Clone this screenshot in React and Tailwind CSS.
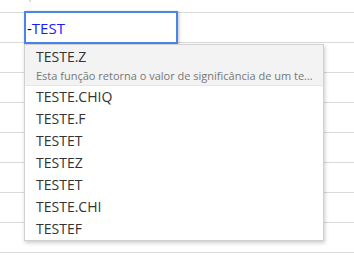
import React from "react";

export default function App() {
  const rows = Array.from({ length: 8 });
  const items = ["TESTE.CHIQ", "TESTE.F", "TESTET", "TESTEZ", "TESTET", "TESTE.CHI", "TESTEF"];
  return (
    <div className="relative w-[354px] h-[275px] bg-white overflow-hidden" style={{ fontFamily: '"Open Sans", sans-serif' }}>
      <div className="flex flex-col">
        <div className="h-[13px] border-b border-[#dadada]" />
        {rows.map((_, i) => (
          <div key={i} className="h-[30px] border-b border-[#dadada]" />
        ))}
      </div>
      <div className="absolute left-[29px] top-0 w-[2px] h-[2px] bg-[#d0d0d0] rounded-sm" />

      <div className="absolute left-[24px] top-[11px] w-[154px] h-[33px] border-2 border-[#4a86e8] bg-white flex items-center shadow-[1px_1px_3px_rgba(0,0,0,0.25)]">
        <span className="text-[15px] leading-none pl-[1px] pt-[1px]">
          <span className="text-black">-</span>
          <span className="text-[#1a1aff]">TEST</span>
        </span>
      </div>

      <div className="absolute left-[24px] top-[44px] w-[300px] bg-white border border-[#d0d0d0] shadow-[1px_2px_4px_rgba(0,0,0,0.2)]">
        <div className="bg-[#f3f3f3] border-b border-[#e6e6e6] px-[11px] pt-[2px] pb-[1px]">
          <div className="text-[14px] leading-[20px] text-[#333]">TESTE.Z</div>
          <div className="text-[11px] leading-[17px] text-[#777] whitespace-nowrap">
            Esta função retorna o valor de significância de um te...
          </div>
        </div>
        <div className="flex flex-col">
          {items.map((t, i) => (
            <div key={i} className="px-[11px] h-[22px] text-[14px] leading-[22px] text-[#333]">
              {t}
            </div>
          ))}
        </div>
      </div>
    </div>
  );
}
